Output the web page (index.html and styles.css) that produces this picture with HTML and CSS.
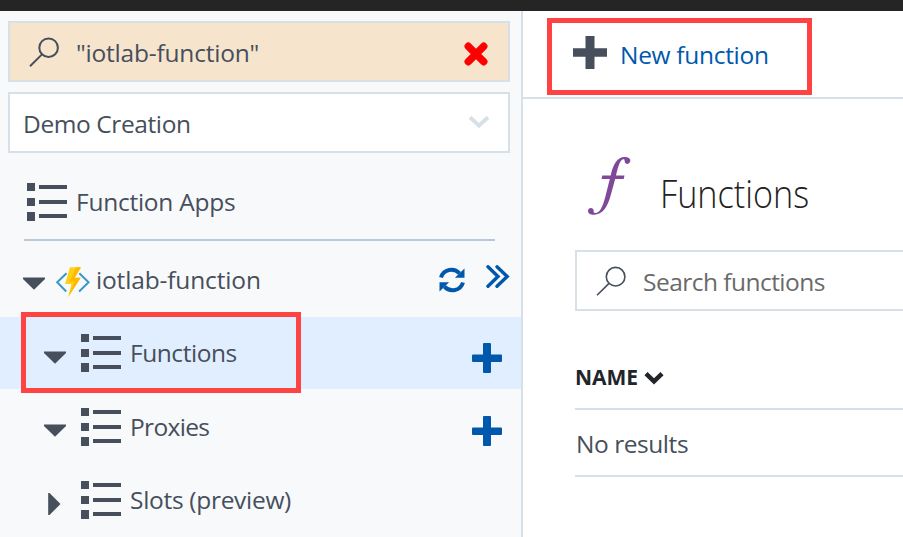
FILE: index.html
```html
<!DOCTYPE html>
<html lang="en">
<head>
<meta charset="utf-8">
<title>Function Apps</title>
<link rel="stylesheet" href="styles.css">
</head>
<body>
<svg class="sprite" width="0" height="0" aria-hidden="true">
  <symbol id="list" viewBox="0 0 40 38">
    <path d="M0 0h8v8H0zM0 15h8v8H0zM0 29h8v9H0zM12 2h28v4H12zM12 17h28v4H12zM12 31h28v4H12z"/>
  </symbol>
  <symbol id="down" viewBox="0 0 22 13"><path d="M0 .4h22v1.5L11 12.8 0 1.9z"/></symbol>
  <symbol id="right" viewBox="0 0 13 22"><path d="M.2 0h1.3l11 11-11 11H.2z"/></symbol>
  <symbol id="glass" viewBox="0 0 31 30">
    <circle cx="19.6" cy="10.7" r="9.3"/><path d="M13 17.4 1 29.2"/>
  </symbol>
  <symbol id="plus" viewBox="0 0 30 30">
    <path d="M12 0h6q1 0 1 1v10.400h10q1 0 1 1v5.700q0 1-1 1H19V29q0 1-1 1h-6q-1 0-1-1v-9.900H1q-1 0-1-1v-5.700q0-1 1-1h10V1q0-1 1-1z"/>
  </symbol>
</svg>
<div class="topbar"></div>
<div class="app">
  <aside class="sidebar">
    <div class="field filter">
      <svg class="glass" width="31" height="30"><use href="#glass"/></svg>
      <span class="label filter-text">"iotlab-function"</span>
      <svg class="clear" width="24" height="24" viewBox="0 0 24 24"><path d="M4.300 4.300 19.700 19.700M19.700 4.300 4.300 19.700"/></svg>
    </div>
    <div class="field subscription">
      <span class="label subscription-text">Demo Creation</span>
      <svg class="expand" width="22" height="14" viewBox="0 0 22 14"><path d="M2 2.200 11 10.600l9-8.400"/></svg>
    </div>
    <div class="apps">
      <svg class="list" width="40" height="38"><use href="#list"/></svg>
      <span class="label apps-text">Function Apps</span>
    </div>
    <div class="row root">
      <svg class="caret" width="22" height="13"><use href="#down"/></svg>
      <svg class="bolt" width="34" height="31" viewBox="0 0 34 31">
        <path class="bracket" d="M10.500 6.200 1.200 15.300l9 9.200M23.300 6.200l9.300 9.100-9.500 9.200"/>
        <path class="flash" d="M14 .2h11l-6.300 10.600h6L12.200 30l3.200-13H9z"/>
        <path class="shade" d="M20 .2h5l-6.300 10.600h6L12.200 30l6.300-15.500h-4.800z"/>
      </svg>
      <span class="label root-text">iotlab-function</span>
      <svg class="refresh" width="26" height="26" viewBox="0 0 26 26">
        <path class="arc" d="M2 10.500C4.500 2 15 .2 20.500 6.300M24 15.500C21.500 24 11 25.800 5.500 19.700"/>
        <path class="head" d="M25.500 1.500v9.300h-9.600zM.5 24.500v-9.300h9.600z"/>
      </svg>
      <svg class="more" width="24" height="24" viewBox="0 0 24 24"><path d="M2 1.800 12 11.500 2 21.300M11 1.800 21.200 11.500 11 21.300"/></svg>
    </div>
    <div class="row selected">
      <svg class="caret" width="22" height="13"><use href="#down"/></svg>
      <svg class="list" width="40" height="38"><use href="#list"/></svg>
      <span class="label functions-text">Functions</span>
      <svg class="add" width="30" height="30"><use href="#plus"/></svg>
      <div class="callout callout-tree"></div>
    </div>
    <div class="row proxies">
      <svg class="caret" width="22" height="13"><use href="#down"/></svg>
      <svg class="list" width="40" height="38"><use href="#list"/></svg>
      <span class="label proxies-text">Proxies</span>
      <svg class="add" width="30" height="30"><use href="#plus"/></svg>
    </div>
    <div class="row slots">
      <svg class="caret" width="13" height="22"><use href="#right"/></svg>
      <svg class="list" width="40" height="38"><use href="#list"/></svg>
      <span class="label slots-text">Slots (preview)</span>
    </div>
  </aside>
  <main class="content">
    <div class="toolbar">
      <svg class="new-icon" width="34" height="33" viewBox="0 0 34 33"><path d="M12.500 0h9v12.300H34v8.400H21.500V33h-9V20.700H0v-8.400h12.500z"/></svg>
      <span class="label new-text">New function</span>
      <div class="callout callout-new"></div>
    </div>
    <div class="title">
      <svg class="fn" width="44" height="59" viewBox="0 0 44 59">
        <path d="M43.300 3.600C43.300 1.600 41 .1 37.500.1C30 .1 26 8 23.700 18.500H15.300L14.500 22H22.800L18.400 39.500C15.800 49.500 13 56 8.300 56C6.700 56 6.600 55.300 6.700 53.800C6.600 52 5.300 51.100 4 51.100C2.300 51.100 1 52.300 1 53.900C1 56 3.200 57.700 7 57.700C15.500 57.700 20.500 50 23.500 39L28.200 22H36.700L37.500 18.500H29C31 9.500 33.300 2.200 36.500 2.200C37.500 2.200 37.600 2.800 37.600 4C37.700 5.900 39 6.900 40.500 6.900C42.100 6.900 43.300 5.500 43.300 3.600z"/>
      </svg>
      <h1 class="heading">Functions</h1>
    </div>
    <div class="search">
      <svg class="glass" width="31" height="30"><use href="#glass"/></svg>
      <span class="label search-text">Search functions</span>
    </div>
    <div class="thead">
      <span class="name">NAME</span>
      <svg class="sort" width="20" height="14" viewBox="0 0 20 14"><path d="M2 2.700 10 10.300l8-7.600"/></svg>
    </div>
    <div class="empty"><span class="label empty-text">No results</span></div>
  </main>
</div>
</body>
</html>
```
FILE: styles.css
```css
* { box-sizing: border-box; }
body {
  margin: 0;
  height: 537px;
  overflow: hidden;
  font-family: "Open Sans", "Noto Sans", sans-serif;
  font-size: 24.5px;
  color: #464f5b;
  background: #fff;
}
svg { display: block; flex: none; fill: #464f5b; }
.sprite { position: absolute; }
.topbar { height: 11px; background: #252525; }
.app { display: flex; height: 526px; }
.label { line-height: 34px; white-space: nowrap; letter-spacing: -0.45px; }
.glass { fill: none; stroke: #464f5b; stroke-width: 2; }

.sidebar {
  width: 523px;
  flex: none;
  padding-top: 10px;
  background: #f8f9fb;
  border-right: 2px solid #d7e0e6;
}
.field {
  display: flex;
  align-items: center;
  width: 502px;
  height: 61px;
  margin: 0 0 10px 8px;
  border: 2px solid #d7e0e6;
  background: #fff;
}
.field .label { margin-top: 2px; }
.filter { background: #f7e4cd; padding: 0 19px; }
.filter .glass { margin-top: 1px; }
.filter .filter-text { margin-left: 16px; letter-spacing: -0.2px; }
.clear { margin: 5px 1px 0 auto; stroke: #f00; stroke-width: 7.5; stroke-linecap: round; }
.subscription { padding: 0 18px 0 13px; }
.subscription-text { letter-spacing: -0.4px; }
.expand { margin: -2px 0 0 auto; fill: none; stroke: #d7e0e6; stroke-width: 4; }
.apps {
  display: flex;
  align-items: center;
  height: 78px;
  width: 471px;
  margin-left: 24px;
  padding-left: 3px;
  border-bottom: 2px solid #b9c8d6;
}
.apps .list { margin-top: 2px; }
.apps-text { margin: 2px 0 0 9px; letter-spacing: -0.25px; }

.row {
  position: relative;
  display: flex;
  align-items: center;
  height: 73px;
  padding: 0 19px 0 44px;
}
.row .caret { margin-top: 8px; }
.row .list { margin-left: 15px; }
.row .label { margin-left: 9px; }
.root { height: 76px; padding: 0 12px 0 23px; }
.root .bolt { margin: 6px 0 0 11px; }
.root .label { margin: 2px 0 0 6px; letter-spacing: -0.15px; }
.bracket { fill: none; stroke: #3999c6; stroke-width: 2; }
.flash { fill: #fcd116; }
.shade { fill: #ffb900; }
.refresh { margin: 1px 21px 0 auto; }
.arc { fill: none; stroke: #0058ad; stroke-width: 4; }
.head { fill: #0058ad; }
.more { margin: -4px -1px 0 0; fill: none; stroke: #0058ad; stroke-width: 3.4; stroke-linecap: round; }
.selected { height: 72px; margin-bottom: 1px; background: #e1eeff; }
.add { margin: 10px 0 0 auto; fill: #0058ad; }
.proxies .add { margin-top: 8px; }
.proxies-text { letter-spacing: -0.65px; }
.slots { padding-left: 48px; }
.slots .list { margin-left: 20px; }
.slots-text { letter-spacing: -0.3px; }
.callout { position: absolute; border: 5px solid #ff4343; }
.callout-tree { left: 21px; top: -5px; width: 280px; height: 81px; }
.callout-new { left: 24px; top: 7px; width: 265px; height: 77px; }

.content { flex: 1; min-width: 0; }
.toolbar {
  position: relative;
  display: flex;
  align-items: center;
  height: 88px;
  padding-left: 50px;
  border-bottom: 2px solid #d7e0e6;
}
.new-icon { margin-top: -3px; }
.new-text { margin: 2px 0 0 13px; color: #0058ad; letter-spacing: -0.3px; }
.title { display: flex; align-items: flex-start; height: 151px; padding: 58px 0 0 64px; }
.fn { fill: #804998; }
.heading {
  margin: 10px 0 0 29px;
  font-size: 38px;
  line-height: 52px;
  font-weight: 300;
  color: #222;
  transform: scaleX(0.9);
  transform-origin: left;
}
.search {
  display: flex;
  align-items: center;
  height: 61px;
  margin-left: 52px;
  padding-left: 19px;
  border: 2px solid #d7e0e6;
  border-right: 0;
}
.search .glass { stroke-width: 1.6; }
.search-text { margin: 2px 0 0 16px; color: #6a6a6a; letter-spacing: -0.53px; }
.thead {
  display: flex;
  align-items: center;
  height: 99px;
  margin-left: 52px;
  padding-top: 34px;
  border-bottom: 2px solid #d7e0e6;
  color: #212429;
}
.name { font-size: 21px; line-height: 28px; font-weight: 700; }
.sort { margin: 2px 0 0 6px; fill: none; stroke: #212429; stroke-width: 4.5; }
.empty {
  display: flex;
  align-items: center;
  height: 67px;
  margin-left: 52px;
  border-bottom: 2px solid #d7e0e6;
}
.empty-text { margin: 2px 0 0 1px; }
```
